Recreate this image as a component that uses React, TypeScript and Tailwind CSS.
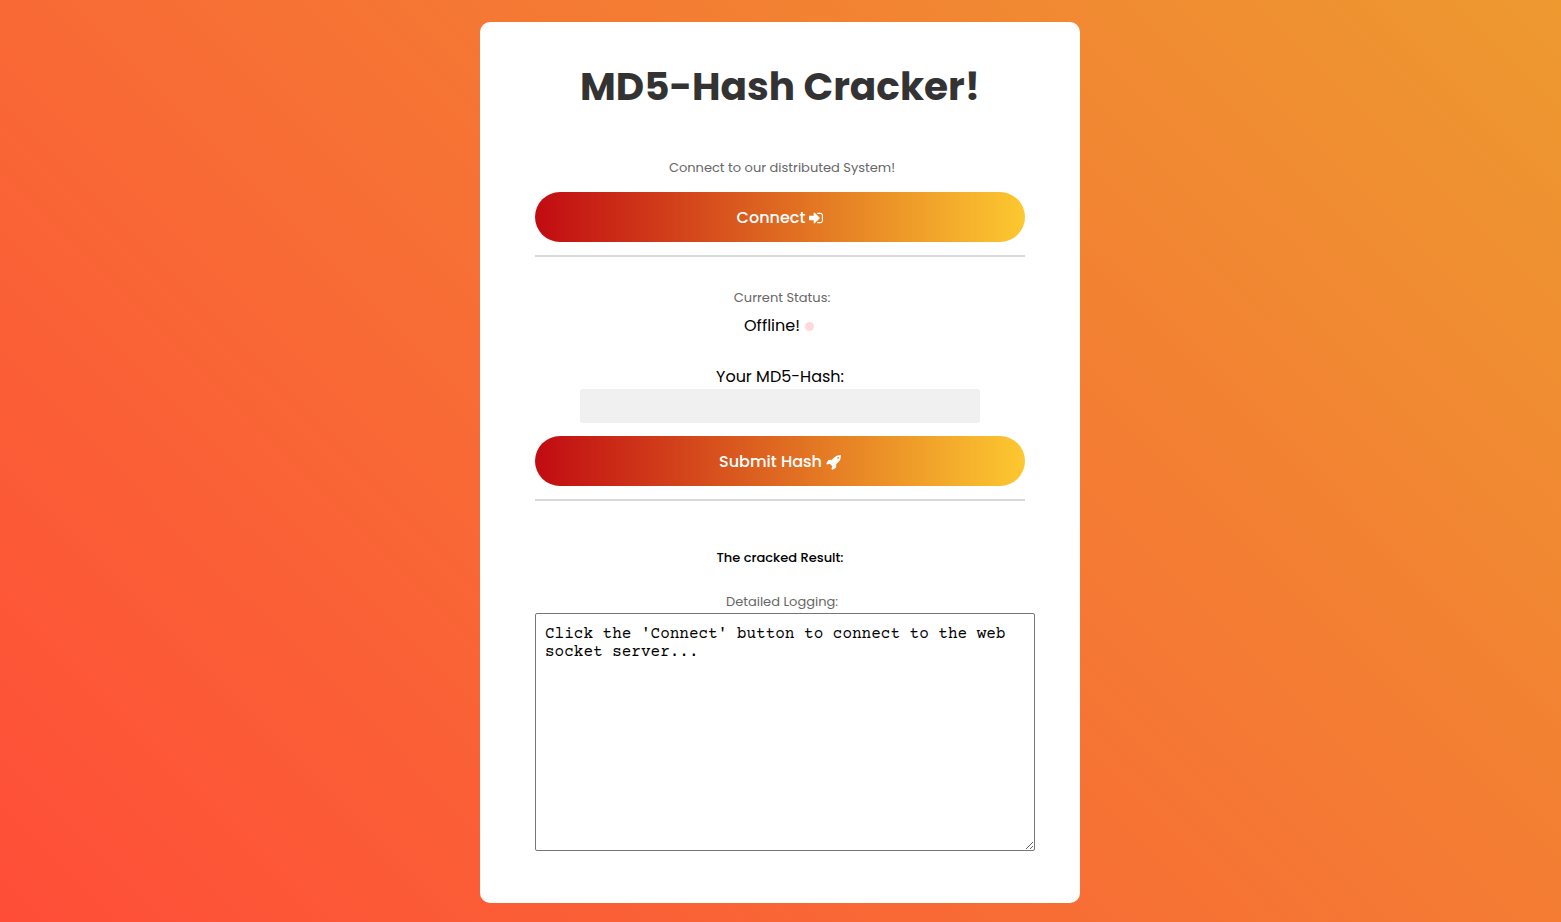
import React from "react";

const wide =
  "flex h-[50px] w-full cursor-pointer items-center justify-center gap-1 rounded-full bg-linear-to-r/srgb from-[#c10b12] to-[#fdc830] pt-[2px] text-base font-medium text-white";
const caption = "pl-1 text-[13px] leading-5 text-[#666666]";
const rule = "mt-[13px] w-full border-t-2 border-[#d9d9d9]";

function SignInIcon() {
  return (
    <svg viewBox="0 0 1536 1536" className="size-[14px]" fill="currentColor" aria-hidden="true">
      <path d="M1184 768q0 26-19 45l-544 544q-19 19-45 19t-45-19-19-45v-288H64q-26 0-45-19t-19-45V576q0-26 19-45t45-19h448V224q0-26 19-45t45-19 45 19l544 544q19 19 19 45zM1536 480v576q0 119-84.500 203.500T1248 1344H928q-13 0-22.500-9.500T896 1312q0-4-1-20t-.5-26.500 3-23.500 10-19.500T928 1216h320q66 0 113-47t47-113V480q0-66-47-113t-113-47H936l-11.500-1-11.500-3-8-5.500-7-9-2-13.500q0-4-1-20t-.5-26.500 3-23.500 10-19.500T928 192h320q119 0 203.500 84.500T1536 480z" />
    </svg>
  );
}

function RocketIcon() {
  return (
    <svg viewBox="0 0 1664 1664" className="size-[15px]" fill="currentColor" aria-hidden="true">
      <path d="M1440 320q0-40-28-68t-68-28-68 28-28 68 28 68 68 28 68-28 28-68zM1664 32q0 249-75.500 430.500t-253.500 360.500q-81 80-195 176l-20 379q-2 16-16 26l-384 224q-7 4-16 4-12 0-23-9l-64-64q-13-14-8-32l85-276-281-281-276 85q-3 1-9 1-14 0-23-9l-64-64q-17-19-5-39l224-384q10-14 26-16l379-20q96-114 176-195 188-187 358-258t431-71q14 0 24 9.500t10 22.500z" />
    </svg>
  );
}

export default function App() {
  return (
    <div className="min-h-screen bg-linear-45/srgb from-[#ff4d38] to-[#ed9930] py-[22px] pr-px font-['Poppins','Inter',sans-serif] text-black pb-[19px]">
      <main className="mx-auto flex w-full max-w-[600px] flex-col items-center rounded-[10px] bg-white px-[55px] pt-8 pb-[52px]">
        <h1 className="text-[39px] leading-[66px] font-bold text-[#333333]">MD5-Hash Cracker!</h1>
        <p className={`${caption} mt-[38px]`}>Connect to our distributed System!</p>
        <button type="button" className={`${wide} mt-[14px]`}>
          Connect <SignInIcon />
        </button>
        <hr className={rule} />
        <p className={`${caption} mt-[31px]`}>Current Status:</p>
        <p className="mt-[6px] flex items-center gap-[5px] pr-[2px] text-base leading-6">
          Offline! <span className="size-[9px] rounded-full bg-[#ffd9d9]" />
        </p>
        <label htmlFor="hash" className="mt-[27px] text-base leading-6">Your MD5-Hash:</label>
        <input id="hash" type="text" className="h-[34px] w-full max-w-[400px] rounded-[3px] bg-[#f0f0f0] px-2" />
        <button type="button" className={`${wide} mt-[13px]`}>
          Submit Hash <RocketIcon />
        </button>
        <hr className={rule} />
        <p className="mt-[47px] text-[13px] leading-5 font-medium">The cracked Result:</p>
        <label htmlFor="log" className={`${caption} mt-6`}>Detailed Logging:</label>
        <textarea
          id="log"
          className="mt-px h-[238px] w-[calc(100%+10px)] self-start rounded-[2px] border border-[#767676] px-[9px] py-[11px] font-['Courier_Prime','Liberation_Mono',monospace] text-base leading-[18px]"
          defaultValue="Click the 'Connect' button to connect to the web socket server..."
        />
      </main>
    </div>
  );
}
